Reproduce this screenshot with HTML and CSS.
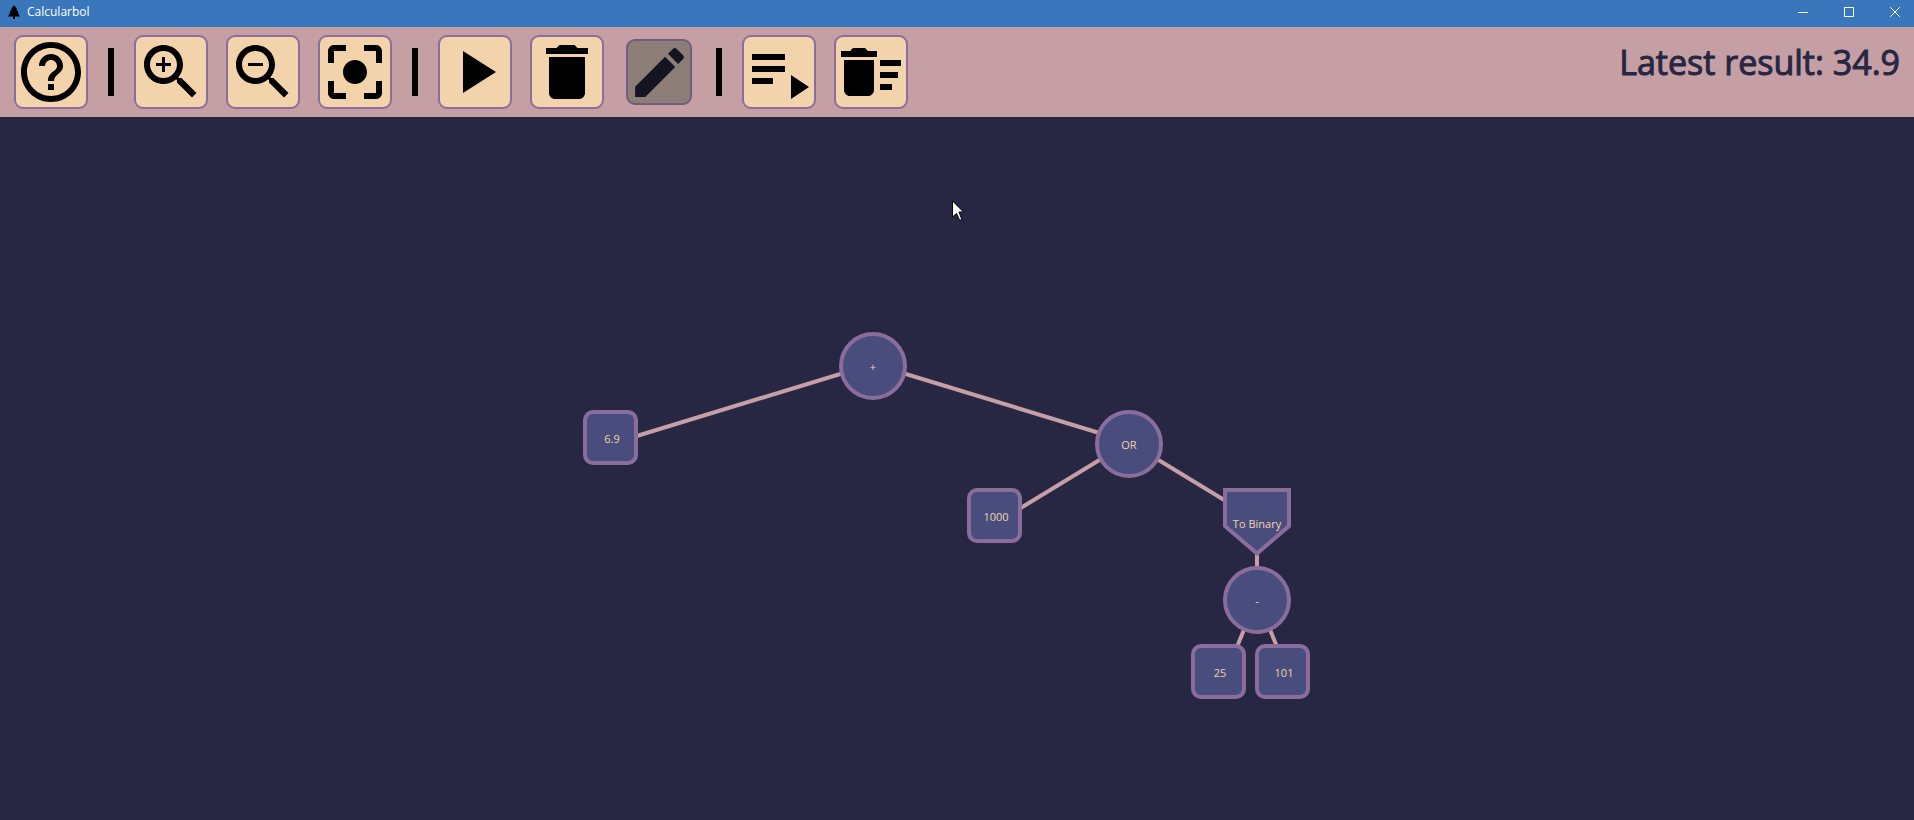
FILE: index.html
```html
<!DOCTYPE html>
<html lang="en">
<head>
<meta charset="utf-8">
<title>Calcularbol</title>
<link rel="stylesheet" href="styles.css">
</head>
<body>
<header class="titlebar">
  <svg class="app-icon" viewBox="0 0 12 14" aria-hidden="true"><path d="M6 0 9 4 8.300 4 10.500 7.500 9.800 7.500 12 11.500H7V14H5V11.500H0L2.200 7.500 1.500 7.500 3.700 4 3 4Z"/></svg>
  <h1 class="app-title">Calcularbol</h1>
  <div class="window-controls">
    <button class="window-button" type="button" aria-label="Minimize"><svg viewBox="0 0 10 10"><path d="M0 5.500H10"/></svg></button>
    <button class="window-button" type="button" aria-label="Maximize"><svg viewBox="0 0 10 10"><path d="M.5.5h9v9h-9z"/></svg></button>
    <button class="window-button" type="button" aria-label="Close"><svg viewBox="0 0 10 10"><path d="M.2.2 9.800 9.800M9.800.2.2 9.800"/></svg></button>
  </div>
</header>
<div class="toolbar">
  <div class="tools" role="toolbar" aria-label="Tree tools">
    <button class="tool" type="button" aria-label="Help"><svg viewBox="0 0 24 24"><path d="M11 18h2v-2h-2v2zm1-16C6.480 2 2 6.480 2 12s4.480 10 10 10 10-4.480 10-10S17.520 2 12 2zm0 18c-4.410 0-8-3.590-8-8s3.590-8 8-8 8 3.590 8 8-3.590 8-8 8zm0-14c-2.210 0-4 1.790-4 4h2c0-1.100.9-2 2-2s2 .9 2 2c0 2-3 1.750-3 5h2c0-2.250 3-2.500 3-5 0-2.210-1.790-4-4-4z"/></svg></button>
    <span class="separator"></span>
    <button class="tool" type="button" aria-label="Zoom in"><svg viewBox="0 0 24 24"><path d="M15.500 14h-.79l-.28-.27C15.410 12.590 16 11.110 16 9.500 16 5.910 13.090 3 9.500 3S3 5.910 3 9.500 5.910 16 9.500 16c1.610 0 3.090-.59 4.230-1.570l.27.28v.79l5 4.990L20.490 19l-4.990-5zm-6 0C7.010 14 5 11.990 5 9.500S7.010 5 9.500 5 14 7.010 14 9.500 11.990 14 9.500 14zM12 10h-2v2H9v-2H7V9h2V7h1v2h2z"/></svg></button>
    <button class="tool" type="button" aria-label="Zoom out"><svg viewBox="0 0 24 24"><path d="M15.500 14h-.79l-.28-.27C15.410 12.590 16 11.110 16 9.500 16 5.910 13.090 3 9.500 3S3 5.910 3 9.500 5.910 16 9.500 16c1.610 0 3.090-.59 4.230-1.570l.27.28v.79l5 4.990L20.490 19l-4.990-5zm-6 0C7.010 14 5 11.990 5 9.500S7.010 5 9.500 5 14 7.010 14 9.500 11.990 14 9.500 14zM7 9h5v1H7z"/></svg></button>
    <button class="tool" type="button" aria-label="Center view"><svg viewBox="0 0 24 24"><path d="M12 8c-2.210 0-4 1.790-4 4s1.790 4 4 4 4-1.790 4-4-1.790-4-4-4zm-7 7H3v4c0 1.100.9 2 2 2h4v-2H5v-4zM5 5h4V3H5c-1.100 0-2 .9-2 2v4h2V5zm14-2h-4v2h4v4h2V5c0-1.100-.9-2-2-2zm0 16h-4v2h4c1.100 0 2-.9 2-2v-4h-2v4z"/></svg></button>
    <span class="separator"></span>
    <button class="tool" type="button" aria-label="Run"><svg viewBox="0 0 24 24"><path d="M8 5v14l11-7z"/></svg></button>
    <button class="tool" type="button" aria-label="Delete"><svg viewBox="0 0 24 24"><path d="M6 19c0 1.100.9 2 2 2h8c1.100 0 2-.9 2-2V7H6v12zM19 4h-3.500l-1-1h-5l-1 1H5v2h14V4z"/></svg></button>
    <button class="tool tool-disabled" type="button" aria-label="Edit" disabled><svg viewBox="0 0 24 24"><path d="M3 17.250V21h3.750L17.810 9.940l-3.750-3.750L3 17.250zM20.710 7.040c.39-.39.39-1.020 0-1.410l-2.340-2.340c-.39-.39-1.020-.39-1.410 0l-1.830 1.830 3.750 3.750 1.830-1.830z"/></svg></button>
    <span class="separator"></span>
    <button class="tool" type="button" aria-label="Run all"><svg viewBox="0 0 24 24"><path d="M3 10h11v2H3zM3 6h11v2H3zM3 14h7v2H3zM16 13v8l6-4z"/></svg></button>
    <button class="tool" type="button" aria-label="Delete all"><svg viewBox="0 0 24 24"><path d="M15 16h4v2h-4zM15 8h7v2h-7zM15 12h6v2h-6zM3 18c0 1.100.9 2 2 2h6c1.100 0 2-.9 2-2V8H3v10zM14 5h-3l-1-1H6L5 5H2v2h12V5z"/></svg></button>
  </div>
  <output class="result">Latest result: 34.9</output>
</div>
<main class="canvas">
  <div class="tree">
    <svg class="edges" viewBox="0 0 748 368" aria-hidden="true"><path d="M290 32 34 110M290 32 546 110M546 110 418 188M546 110 674 188M674 188V266M674 266 642 344M674 266 706 344"/></svg>
    <div class="node operator root">+</div>
    <div class="node value left-value">6.9</div>
    <div class="node operator or">OR</div>
    <div class="node value or-value">1000</div>
    <div class="node converter">
      <svg class="converter-shape" viewBox="0 0 68 68" aria-hidden="true"><path d="M2 2H66V38L34 65.500 2 38Z"/></svg>
      <span class="converter-label">To Binary</span>
    </div>
    <div class="node operator minus">-</div>
    <div class="node value minus-left">25</div>
    <div class="node value minus-right">101</div>
    <svg class="pointer" viewBox="0 0 12 21" aria-hidden="true"><path d="M.5 1V17L4.500 13.500 7.500 20H10L7 12H11.500Z"/></svg>
  </div>
</main>
</body>
</html>
```

FILE: styles.css
```css
* {
  box-sizing: border-box;
}

body {
  display: flex;
  flex-direction: column;
  min-height: 100vh;
  margin: 0;
  background: #272744;
  font-family: "Segoe UI", "Open Sans", "Noto Sans", sans-serif;
}

button {
  padding: 0;
  border: 0;
  background: none;
}

.titlebar {
  display: flex;
  align-items: center;
  height: 27px;
  padding: 0 0 4px 8px;
  background: #3a76bb;
}

.app-icon {
  width: 12px;
  height: 14px;
}

.app-title {
  margin: 0 0 0 7px;
  color: #fff;
  font-size: 12px;
  font-weight: 400;
  line-height: 16px;
}

.window-controls {
  display: flex;
  margin-left: auto;
}

.window-button {
  display: flex;
  justify-content: center;
  width: 46px;
}

.window-button:last-child {
  width: 38px;
  margin-left: 4px;
}

.window-button svg {
  width: 10px;
  height: 10px;
  fill: none;
  stroke: #fff;
}

.toolbar {
  display: flex;
  justify-content: space-between;
  padding: 8px 14px;
  background: #c69fa5;
}

.tools {
  display: flex;
  align-items: center;
  gap: 18px;
}

.tool {
  display: flex;
  align-items: center;
  justify-content: center;
  width: 74px;
  height: 74px;
  border: 2px solid #8b6d9c;
  border-radius: 9px;
  background: #f2d3ab;
}

.tool svg {
  flex: none;
  width: 72px;
  height: 72px;
}

.tool-disabled {
  width: 66px;
  height: 66px;
  margin: 0 4px;
  border-color: #725a80;
  background: #8c7d77;
}

.tool-disabled svg {
  width: 65px;
  height: 65px;
  fill: #141422;
}

.separator {
  width: 6px;
  height: 48px;
  margin: 0 2px;
  background: #000;
}

.result {
  color: #272744;
  font-size: 34px;
  line-height: 54px;
  -webkit-text-stroke: 1px #272744;
}

.canvas {
  display: flex;
  flex: 1;
  justify-content: center;
  padding-top: 215px;
}

.tree {
  position: relative;
  width: 748px;
  height: 368px;
}

.edges {
  display: block;
  width: 748px;
  height: 368px;
  fill: none;
  stroke: #c69fa5;
  stroke-width: 4;
}

.node {
  position: absolute;
  display: flex;
  align-items: center;
  justify-content: center;
  color: #f2d3ab;
  font-size: 11px;
  line-height: 16px;
}

.operator {
  width: 68px;
  height: 68px;
  padding-top: 2px;
  border: 4px solid #8b6d9c;
  border-radius: 50%;
  background: #494d7e;
}

.value {
  width: 55px;
  height: 55px;
  padding: 2px 0 0 3px;
  border: 4px solid #8b6d9c;
  border-radius: 10px;
  background: #494d7e;
}

.root {
  left: 256px;
  top: 0;
}

.left-value {
  left: 0;
  top: 78px;
}

.or {
  left: 512px;
  top: 78px;
}

.or-value {
  left: 384px;
  top: 156px;
}

.converter {
  left: 640px;
  top: 156px;
  width: 68px;
  height: 68px;
  padding-top: 4px;
}

.converter-shape {
  position: absolute;
  top: 0;
  left: 0;
  width: 68px;
  height: 68px;
  fill: #494d7e;
  stroke: #8b6d9c;
  stroke-width: 4;
}

.converter-label {
  position: relative;
  white-space: nowrap;
}

.minus {
  left: 640px;
  top: 234px;
}

.minus-left {
  left: 608px;
  top: 312px;
}

.minus-right {
  left: 672px;
  top: 312px;
}

.pointer {
  position: absolute;
  left: 369px;
  top: -132px;
  width: 12px;
  height: 21px;
  fill: #fff;
  stroke: #000;
}
```
